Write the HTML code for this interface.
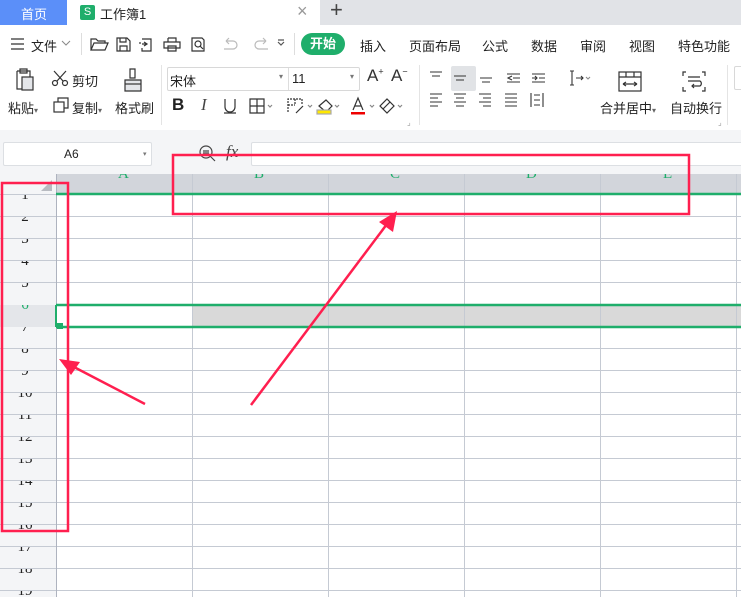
<!DOCTYPE html>
<html><head><meta charset="utf-8"><style>
*{margin:0;padding:0;box-sizing:border-box}
body{width:741px;height:597px;overflow:hidden;background:#fff;font-family:"Liberation Sans","Noto Sans CJK SC",sans-serif;font-size:12px;color:#333;position:relative}
.abs{position:absolute}
.t{position:absolute;white-space:nowrap}
svg{position:absolute;overflow:visible}
</style></head><body>
<div class="abs" style="left:0;top:0;width:741px;height:25px;background:#e1e3e7"></div>
<div class="abs" style="left:0;top:0;width:67px;height:25px;background:#5b8ff9"></div>
<div class="t" style="left:21px;top:4px;color:#fff;font-size:13px">首页</div>
<div class="abs" style="left:67px;top:0;width:253px;height:25px;background:#fff"></div>
<div class="abs" style="left:80px;top:5px;width:15px;height:15px;background:#1fae6b;border-radius:2px;color:#fff;font-size:11px;text-align:center;line-height:15px">S</div>
<div class="t" style="left:100px;top:4px;font-size:13px;color:#222">工作簿1</div>
<div class="t" style="left:297px;top:1px;font-size:18px;color:#999">×</div>
<div class="t" style="left:330px;top:-3px;font-size:22px;color:#444">+</div>
<svg style="left:10px;top:38px" width="16" height="12"><path d="M1 1H14M1 6H14M1 11H14" stroke="#333" stroke-width="1.3"/></svg>
<div class="t" style="left:31px;top:36px;font-size:13px;color:#222">文件</div>
<svg style="left:61px;top:40px" width="10" height="6"><path d="M1 1L5 5L9 1" stroke="#888" fill="none"/></svg>
<div class="abs" style="left:81px;top:33px;width:1px;height:22px;background:#ddd"></div>
<svg style="left:90px;top:36px" width="190" height="16" fill="none" stroke="#333" stroke-width="1.2">
<path d="M1 14V3H6L8 5H15V7M1 14L4 7H18L15 14Z"/>
<path d="M27 2H37L40 5V15H27ZM30 2V6H36V2M30 15V10H37V15"/>
<path d="M52 3H61V15H52V12M52 8H56M54 6L57 8L54 10M50 8V6"/>
<path d="M78 2H86V6M78 6V2M74 6H90V12H74ZM78 10H86V15H78Z"/>
<path d="M102 2H112L114 4V15H102Z"/><circle cx="108" cy="8" r="3"/><path d="M110 10L113 13"/>
<path d="M136 5H143A4 4 0 0 1 143 13H134M136 5L139 2M136 5L139 8" stroke="#bbb"/>
<path d="M176 5H169A4 4 0 0 0 169 13H178M176 5L173 2M176 5L173 8" stroke="#bbb"/>
<path d="M188 6L191 9L194 6M188 4H194" stroke="#555"/>
</svg>
<div class="abs" style="left:294px;top:33px;width:1px;height:22px;background:#ddd"></div>
<div class="abs" style="left:301px;top:33px;width:44px;height:22px;background:#1fae6b;border-radius:11px;color:#fff;font-size:13px;font-weight:bold;text-align:center;line-height:22px">开始</div>
<div class="t" style="left:360px;top:36px;font-size:13px;color:#222">插入</div>
<div class="t" style="left:409px;top:36px;font-size:13px;color:#222">页面布局</div>
<div class="t" style="left:482px;top:36px;font-size:13px;color:#222">公式</div>
<div class="t" style="left:531px;top:36px;font-size:13px;color:#222">数据</div>
<div class="t" style="left:580px;top:36px;font-size:13px;color:#222">审阅</div>
<div class="t" style="left:629px;top:36px;font-size:13px;color:#222">视图</div>
<div class="t" style="left:678px;top:36px;font-size:13px;color:#222">特色功能</div>
<svg style="left:13px;top:68px" width="22" height="24" fill="none" stroke="#333" stroke-width="1.2"><path d="M4 3H17V9M4 3V21H9M7 1H14V5H7Z"/><rect x="9" y="9" width="11" height="13" fill="#e4e6ea"/></svg>
<div class="t" style="left:8px;top:98px;font-size:13px;color:#222">粘贴<span style="font-size:8px;color:#666">▾</span></div>
<svg style="left:52px;top:70px" width="16" height="16" fill="none" stroke="#333" stroke-width="1.2"><circle cx="3" cy="13" r="2.5"/><circle cx="13" cy="13" r="2.5"/><path d="M5 11L14 1M11 11L2 1"/></svg>
<div class="t" style="left:72px;top:71px;font-size:13px;color:#222">剪切</div>
<svg style="left:53px;top:97px" width="16" height="16" fill="none" stroke="#333" stroke-width="1.2"><rect x="1" y="5" width="10" height="10"/><path d="M5 5V1H15V11H11"/></svg>
<div class="t" style="left:72px;top:98px;font-size:13px;color:#222">复制<span style="font-size:8px;color:#666">▾</span></div>
<svg style="left:123px;top:68px" width="20" height="25" fill="none" stroke="#333" stroke-width="1.2"><path d="M7 1H12V10H7Z"/><path d="M2 12H18V23H2Z" fill="#e4e6ea"/><path d="M2 16H18"/></svg>
<div class="t" style="left:115px;top:98px;font-size:13px;color:#222">格式刷</div>
<div class="abs" style="left:161px;top:65px;width:1px;height:60px;background:#e4e4e4"></div>
<div class="abs" style="left:167px;top:67px;width:193px;height:24px;border:1px solid #d8d8d8;border-radius:2px;background:#fff"></div>
<div class="abs" style="left:288px;top:68px;width:1px;height:22px;background:#ddd"></div>
<div class="t" style="left:170px;top:71px;font-size:13px;color:#222">宋体</div>
<div class="t" style="left:279px;top:72px;font-size:8px;color:#777">▾</div>
<div class="t" style="left:292px;top:71px;font-size:13px;color:#222">11</div>
<div class="t" style="left:350px;top:72px;font-size:8px;color:#777">▾</div>
<div class="t" style="left:367px;top:66px;font-size:17px;color:#333">A<sup style="font-size:9px">+</sup></div>
<div class="t" style="left:391px;top:66px;font-size:17px;color:#333">A<sup style="font-size:9px">−</sup></div>
<div class="t" style="left:172px;top:95px;font-size:17px;font-weight:bold;color:#222">B</div>
<div class="t" style="left:201px;top:95px;font-size:17px;font-style:italic;color:#444;font-family:'Liberation Serif',serif">I</div>
<svg style="left:224px;top:98px" width="180" height="18" fill="none" stroke="#333" stroke-width="1.2">
<path d="M1 1V9A5 5 0 0 0 11 9V1M0 15H12"/>
<path d="M26 1H40V15H26ZM33 1V15M26 8H40"/>
<path d="M44 7L46 9L48 7" stroke="#888"/>
<path d="M64 14V1H78V6M64 7H71M71 1V7" stroke-dasharray="2 1"/><path d="M72 15L79 8"/>
<path d="M84 7L86 9L88 7" stroke="#888"/>
<path d="M95 8L102 2L108 8L102 14Z"/><rect x="93" y="12" width="14" height="4" fill="#ffe800" stroke="#aaa"/>
<path d="M111 7L113 9L115 7" stroke="#888"/>
<path d="M129 12L134 0L139 12M131 8H137"/><rect x="127" y="14" width="14" height="2.5" fill="#e00" stroke="none"/>
<path d="M146 7L148 9L150 7" stroke="#888"/>
<path d="M156 8L163 1L170 8L163 15Z"/><path d="M159 11L166 4"/>
<path d="M174 7L176 9L178 7" stroke="#888"/>
</svg>
<div class="t" style="left:407px;top:118px;font-size:8px;color:#999">⌟</div>
<div class="abs" style="left:419px;top:65px;width:1px;height:60px;background:#e4e4e4"></div>
<div class="abs" style="left:451px;top:66px;width:25px;height:25px;background:#e1e3e6;border-radius:2px"></div>
<svg style="left:429px;top:71px" width="170" height="40" fill="none" stroke="#333" stroke-width="1.1">
<path d="M1 1H13M3 5H11"/><path d="M25 5H37M27 9H35"/><path d="M51 11H63M53 15H61" transform="translate(0,-4)"/>
<path d="M78 3H91M78 11H91M84 7H91M83 5L79 7L83 9"/>
<path d="M103 3H116M103 11H116M110 7H116M103 7H108M106 5L108 7L106 9"/>
<path d="M143 0V14M141 0H145M141 14H145M147 7H154M152 5L154 7L152 9"/>
<path d="M157 6L159 8L161 6" stroke="#888"/>
<path d="M1 27H13M1 31H9M1 35H13M1 39H9" transform="translate(0,-4)"/>
<path d="M25 23H37M27 27H35M25 31H37M27 35H35"/>
<path d="M50 23H62M54 27H62M50 31H62M54 35H62"/>
<path d="M76 23H88M76 27H88M76 31H88M76 35H88"/>
<path d="M102 22V36M114 22V36M105 24H111M105 34H111M105 29H111"/>
</svg>
<svg style="left:618px;top:71px" width="24" height="21" fill="none" stroke="#333" stroke-width="1.2"><rect x="1" y="1" width="22" height="19"/><path d="M1 6H23M8 1V6M16 1V6M5 13H19M5 13L8 11M5 13L8 15M19 13L16 11M19 13L16 15"/></svg>
<div class="t" style="left:600px;top:98px;font-size:13px;color:#222">合并居中<span style="font-size:8px;color:#666">▾</span></div>
<svg style="left:682px;top:71px" width="24" height="21" fill="none" stroke="#333" stroke-width="1.2"><path d="M4 1H1V5M20 1H23V5M4 20H1V16M20 20H23V16M6 6H18M6 10H18A3 3 0 0 1 18 15H10M12 13L10 15L12 17"/></svg>
<div class="t" style="left:670px;top:98px;font-size:13px;color:#222">自动换行</div>
<div class="t" style="left:718px;top:118px;font-size:8px;color:#999">⌟</div>
<div class="abs" style="left:727px;top:65px;width:1px;height:60px;background:#e4e4e4"></div>
<div class="abs" style="left:734px;top:66px;width:20px;height:24px;border:1px solid #d8d8d8;border-radius:2px"></div>
<div class="abs" style="left:0;top:130px;width:741px;height:44px;background:#f4f5f7"></div>
<div class="abs" style="left:3px;top:142px;width:149px;height:24px;background:#fff;border:1px solid #dcdfe3;border-radius:2px"></div>
<div class="t" style="left:64px;top:147px;font-size:12px;color:#222">A6</div>
<div class="t" style="left:143px;top:150px;font-size:7px;color:#777">▾</div>
<svg style="left:199px;top:145px" width="18" height="18" fill="none" stroke="#444" stroke-width="1.2"><circle cx="7" cy="7" r="6"/><path d="M4 6H10M4 8H10M11 11L16 16"/></svg>
<div class="t" style="left:226px;top:142px;font-size:17px;font-style:italic;color:#444;font-family:'Liberation Serif',serif">fx</div>
<div class="abs" style="left:251px;top:142px;width:500px;height:24px;background:#fff;border:1px solid #dcdfe3;border-radius:2px"></div>
<div class="abs" style="left:0;top:174px;width:56px;height:423px;background:#f4f5f7"></div>
<div class="abs" style="left:56px;top:174px;width:685px;height:21px;background:#d2d5db;overflow:hidden">
<div class="t" style="left:62px;top:-8px;font-family:'Liberation Serif',serif;font-size:15px;color:#1fae6b">A</div>
<div class="t" style="left:198px;top:-8px;font-family:'Liberation Serif',serif;font-size:15px;color:#1fae6b">B</div>
<div class="t" style="left:334px;top:-8px;font-family:'Liberation Serif',serif;font-size:15px;color:#1fae6b">C</div>
<div class="t" style="left:470px;top:-8px;font-family:'Liberation Serif',serif;font-size:15px;color:#1fae6b">D</div>
<div class="t" style="left:607px;top:-8px;font-family:'Liberation Serif',serif;font-size:15px;color:#1fae6b">E</div>
</div>
<svg style="left:40px;top:180px" width="12" height="12"><path d="M12 0V11H1Z" fill="#b8bbc1"/></svg>
<div class="abs" style="left:192px;top:305px;width:549px;height:22px;background:#d9d9d9"></div>
<div class="abs" style="left:0;top:305px;width:56px;height:22px;background:#e4e6ea"></div>
<svg style="left:0;top:0" width="741" height="597">
<g stroke="#c5cad3" stroke-width="1">
<path d="M0 216.5H741M0 238.5H741M0 260.5H741M0 282.5H741M0 348.5H741M0 370.5H741M0 392.5H741M0 414.5H741M0 436.5H741M0 458.5H741M0 480.5H741M0 502.5H741M0 524.5H741M0 546.5H741M0 568.5H741M0 590.5H741"/>
<path d="M0 194.5H56"/>
<path d="M192.5 174V597M328.5 174V597M464.5 174V597M600.5 174V597M736.5 174V597"/>
</g>
<path d="M56.5 174V597" stroke="#aeb3bf"/>
<path d="M56 194H741M56 305H741M56 327H741" stroke="#1fae6b" stroke-width="2.5"/>
<path d="M56 305V327" stroke="#1fae6b" stroke-width="2"/>
<rect x="57" y="323" width="6" height="6" fill="#1fae6b"/>
</svg>
<div id="rn"></div>
<svg style="left:0;top:0" width="741" height="597" fill="none" stroke="#ff1f4f" stroke-width="2.5">
<rect x="2" y="183" width="66" height="348"/>
<rect x="173" y="155" width="516" height="59"/>
<path d="M145 404L72 366"/><path d="M59 359L80 362L71 375Z" fill="#ff1f4f" stroke="none"/>
<path d="M251 405L387 224"/><path d="M397 211L393 232L379 222Z" fill="#ff1f4f" stroke="none"/>
</svg>
<script>
var h='';for(var i=1;i<=19;i++){var y=195+(i-1)*22;var c=i==6?'#1fae6b':'#222';
h+='<div class="abs" style="left:0;top:'+y+'px;width:56px;height:21px;overflow:hidden"><div class="t" style="left:0;width:50px;text-align:center;top:-7px;line-height:15px;font-family:\'Liberation Serif\',serif;font-size:15px;color:'+c+'">'+i+'</div></div>';}
document.getElementById('rn').outerHTML=h;
</script>
</body></html>
